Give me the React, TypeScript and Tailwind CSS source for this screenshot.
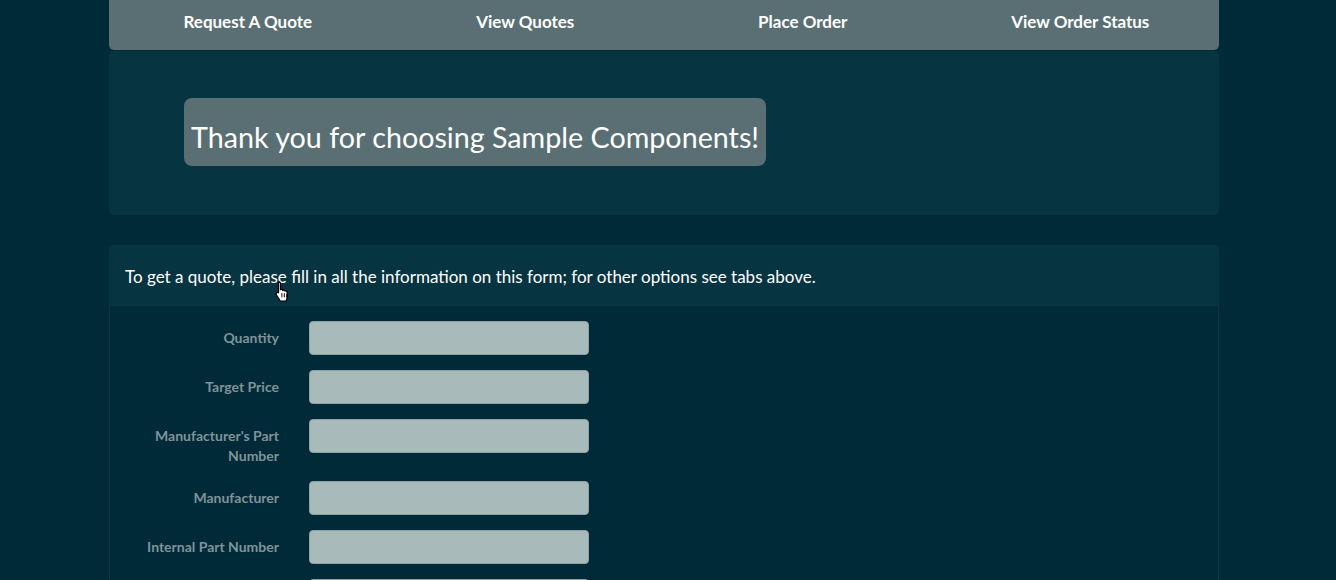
import React from "react";

const fields = [
  "Quantity",
  "Target Price",
  "Manufacturer's Part Number",
  "Manufacturer",
  "Internal Part Number",
  "Date Required",
  "Company",
];

export default function App() {
  return (
    <div className="min-h-screen bg-[#012a38] font-['Lato','Liberation_Sans',sans-serif]">
      <div className="ml-[109px] w-[1110px]">
        <nav className="grid h-[50px] grid-cols-4 rounded-b-[5px] bg-[#5a6f74]">
          {["Request A Quote", "View Quotes", "Place Order", "View Order Status"].map((t) => (
            <a key={t} className="flex justify-center pt-[11px] text-[17px] font-bold leading-[22px] text-white">
              {t}
            </a>
          ))}
        </nav>
        <div className="mt-px h-[164px] rounded-[5px] bg-[#073441] pl-[75px] pt-[47px]">
          <div className="inline-flex h-[68px] items-center rounded-[8px] bg-[#5a6f74] px-[7px] pt-[12px] text-[28.7px] text-white">
            Thank you for choosing Sample Components!
          </div>
        </div>
        <div className="relative mt-[30px]">
          <div className="flex h-[61px] items-center rounded-t-[5px] bg-[#073441] px-4 pt-[2px] text-[17px] text-white">
            To get a quote, please fill in all the information on this form; for other options see tabs above.
          </div>
          <svg
            className="absolute left-[165px] top-[35px] h-[24px] w-[17px]"
            viewBox="0 0 14 20"
          >
            <path
              d="M4 1.5c.8 0 1.3.6 1.3 1.3V8l.3-.1c.7-.2 1.4.2 1.6.8.6-.4 1.5-.2 1.8.5.6-.3 1.4 0 1.7.6l.3 1.3c.3 1.4.2 2.9-.3 4.2l-.8 2.2H5.2L2 12.5c-.5-.7-.3-1.5.3-1.9.5-.3 1.1-.2 1.5.2l-.1-.2V2.8c0-.7.5-1.3 1.3-1.3Z"
              fill="#fff"
              stroke="#000"
              strokeWidth="1"
            />
            <path d="M6.5 11v3.5M8.5 11v3.5M10.5 11.5v3" stroke="#000" strokeWidth="0.8" />
          </svg>
          <div className="flex flex-col gap-[15px] border-x border-[#0a3744] pt-[15px] pb-8">
            {fields.map((f) => (
              <div key={f} className="flex items-start">
                <label className="w-[170px] pl-4 pr-px pt-[7px] text-right text-[14px] font-bold leading-[20px] text-[#7f9398]">
                  <span className="inline-block max-w-[140px]">{f}</span>
                </label>
                <div className="ml-[29px] h-[34px] w-[280px] rounded-[4px] border border-[#8ea2a3] bg-[#a8bbba]" />
              </div>
            ))}
          </div>
        </div>
      </div>
    </div>
  );
}
